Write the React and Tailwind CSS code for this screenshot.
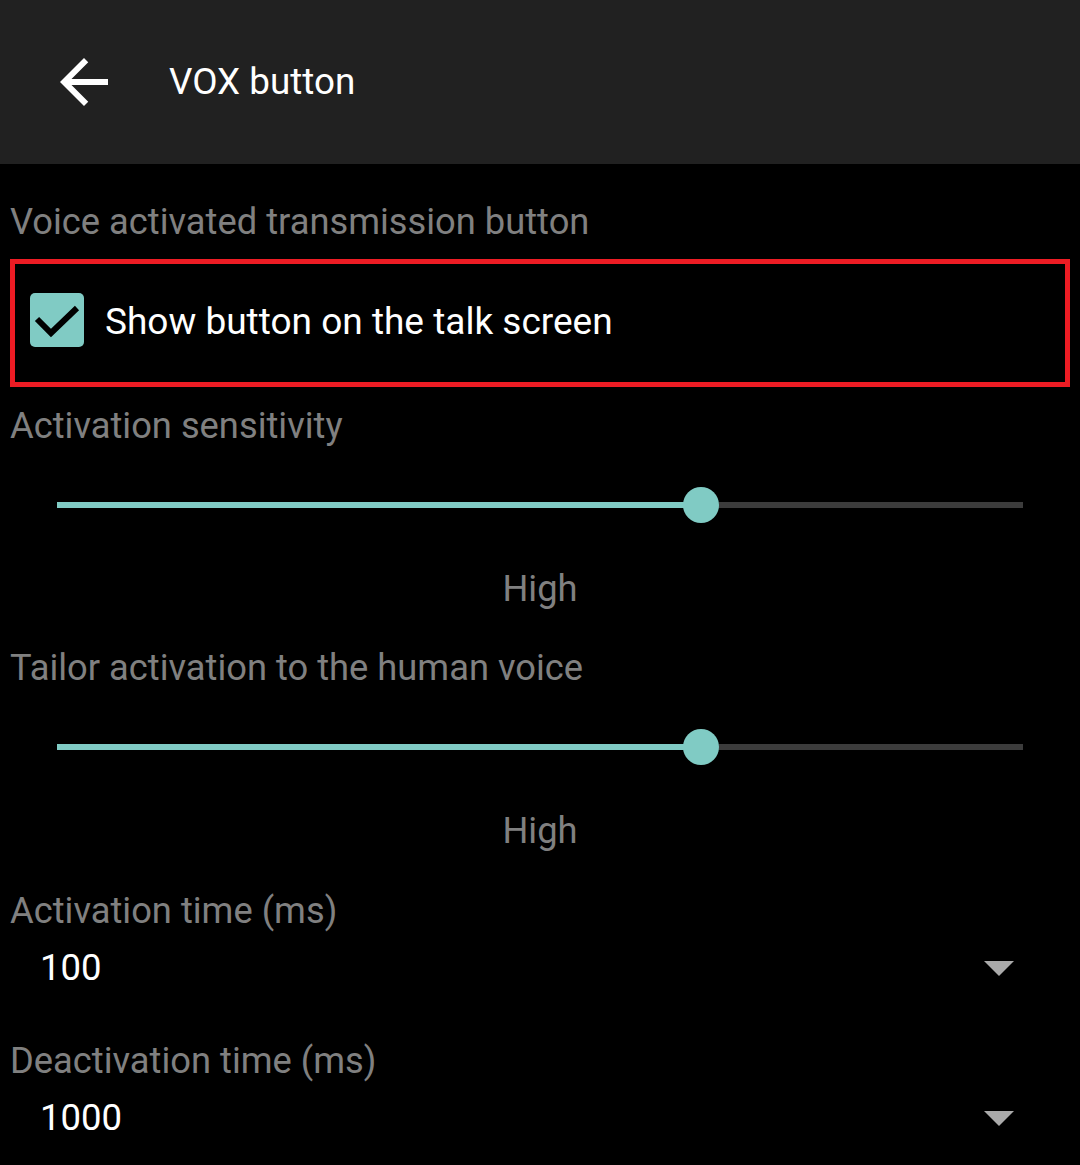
const font = { fontFamily: 'Roboto, "Noto Sans", sans-serif' };

function Slider({ value }) {
    return (
        <div className="relative ml-[47px] w-[966px] h-[36px] flex items-center">
            <div className="h-[6px] w-full bg-[#3c3c3c] flex">
                <div className="h-full bg-[#80cbc4]" style={{ width: `${value}%` }} />
            </div>
            <div className="absolute top-0 w-[36px] h-[36px] rounded-full bg-[#80cbc4] -translate-x-1/2" style={{ left: `${value}%` }} />
        </div>
    );
}

function Label({ className = '', children }) {
    return <div className={`text-[36.3px] leading-[42px] text-[#808080] ${className}`}>{children}</div>;
}

function Dropdown({ className = '', value }) {
    return (
        <div className={`flex items-center justify-between pl-[30px] pr-[56px] ${className}`}>
            <span className="text-[36.5px] leading-[42px] text-white">{value}</span>
            <svg width="30" height="15" viewBox="0 0 30 15"><path d="M0 0h30L15 15z" fill="#aaaaaa" /></svg>
        </div>
    );
}

export default function App() {
    return (
        <div className="w-[1080px] h-[1165px] bg-black overflow-hidden" style={font}>
            <div className="h-[164px] bg-[#212121] flex items-center">
                <svg className="ml-[48px]" width="72" height="72" viewBox="0 0 24 24">
                    <path d="M20 11H7.83l5.59-5.59L12 4l-8 8 8 8 1.41-1.41L7.83 13H20v-2z" fill="#ffffff" />
                </svg>
                <span className="ml-[49px] text-[36.8px] leading-[42px] text-white">VOX button</span>
            </div>

            <div className="px-[10px]">
                <Label className="mt-[37px]">Voice activated transmission button</Label>

                <div className="mt-[16px] h-[128px] border-[5px] border-[#ed1c24] pl-[15px] pt-[29px]">
                    <div className="flex items-center">
                        <div className="w-[54px] h-[54px] rounded-[5px] bg-[#80cbc4] flex items-center justify-center">
                            <svg width="54" height="54" viewBox="0 0 54 54">
                                <path d="M7 26l14 14 26-25" fill="none" stroke="#000" strokeWidth="6" />
                            </svg>
                        </div>
                        <span className="ml-[21px] mt-[3px] text-[37px] leading-[42px] text-white">Show button on the talk screen</span>
                    </div>
                </div>

                <Label className="mt-[18px]">Activation sensitivity</Label>
                <div className="mt-[40px]"><Slider value={66.7} /></div>
                <Label className="mt-[45px] text-center">High</Label>

                <Label className="mt-[37px]">Tailor activation to the human voice</Label>
                <div className="mt-[40px]"><Slider value={66.7} /></div>
                <Label className="mt-[45px] text-center">High</Label>

                <Label className="mt-[38px]">Activation time (ms)</Label>
                <Dropdown className="mt-[15px]" value="100" />

                <Label className="mt-[51px]">Deactivation time (ms)</Label>
                <Dropdown className="mt-[15px]" value="1000" />
            </div>
        </div>
    );
}
